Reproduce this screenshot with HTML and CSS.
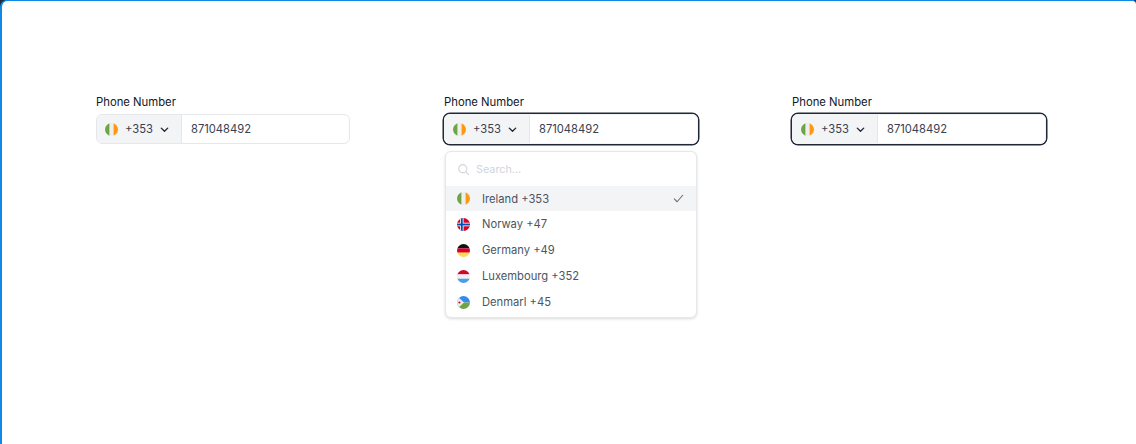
FILE: index.html
```html
<!DOCTYPE html>
<html lang="en">
<head>
<meta charset="utf-8">
<title>Phone Number</title>
<link rel="stylesheet" href="styles.css">
</head>
<body>
<svg width="0" height="0" class="defs">
  <defs>
    <clipPath id="c"><circle cx="6.5" cy="6.5" r="6.5"/></clipPath>
    <symbol id="ie" viewBox="0 0 13 13"><g clip-path="url(#c)"><rect width="13" height="13" fill="#eeeeee"/><rect width="4.4" height="13" fill="#6da544"/><rect x="8.6" width="4.4" height="13" fill="#ff9811"/></g></symbol>
    <symbol id="no" viewBox="0 0 13 13"><g clip-path="url(#c)"><rect width="13" height="13" fill="#d80027"/><rect x="3" width="3.6" height="13" fill="#eeeeee"/><rect y="4.7" width="13" height="3.6" fill="#eeeeee"/><rect x="3.9" width="1.8" height="13" fill="#0052b4"/><rect y="5.6" width="13" height="1.8" fill="#0052b4"/></g></symbol>
    <symbol id="de" viewBox="0 0 13 13"><g clip-path="url(#c)"><rect width="13" height="4.4" fill="#111111"/><rect y="4.4" width="13" height="4.3" fill="#d80027"/><rect y="8.7" width="13" height="4.3" fill="#ffda44"/></g></symbol>
    <symbol id="lu" viewBox="0 0 13 13"><g clip-path="url(#c)"><rect width="13" height="4.4" fill="#d80027"/><rect y="4.4" width="13" height="4.3" fill="#eeeeee"/><rect y="8.7" width="13" height="4.3" fill="#4b9bf5"/></g></symbol>
    <symbol id="dj" viewBox="0 0 13 13"><g clip-path="url(#c)"><rect width="13" height="6.5" fill="#338af3"/><rect y="6.5" width="13" height="6.5" fill="#6da544"/><path d="M0 0 L7 6.5 L0 13 Z" fill="#eeeeee"/><circle cx="2.4" cy="6.5" r="1.1" fill="#d80027"/></g></symbol>
  </defs>
</svg>
<main class="frame">
  <section class="field">
    <label class="label">Phone Number</label>
    <div class="control">
      <div class="prefix"><svg class="flag"><use href="#ie"/></svg><span>+353</span><svg class="chev" viewBox="0 0 12 12"><path d="M2.5 4.5 6 8l3.5-3.5"/></svg></div>
      <div class="number">871048492</div>
    </div>
  </section>
  <section class="field">
    <label class="label">Phone Number</label>
    <div class="control focused">
      <div class="prefix"><svg class="flag"><use href="#ie"/></svg><span>+353</span><svg class="chev" viewBox="0 0 12 12"><path d="M2.5 4.5 6 8l3.5-3.5"/></svg></div>
      <div class="number">871048492</div>
    </div>
    <div class="menu">
      <div class="search">
        <svg class="search-icon" viewBox="0 0 14 14"><circle cx="6.2" cy="6.2" r="4.4"/><path d="m9.5 9.5 3 3"/></svg>
        <span>Search...</span>
      </div>
      <div class="option selected"><svg class="flag"><use href="#ie"/></svg><span>Ireland +353</span><svg class="check" viewBox="0 0 14 14"><path d="M2.5 7.5 5.5 10.5 11.5 3.5"/></svg></div>
      <div class="option"><svg class="flag"><use href="#no"/></svg><span>Norway +47</span></div>
      <div class="option"><svg class="flag"><use href="#de"/></svg><span>Germany +49</span></div>
      <div class="option"><svg class="flag"><use href="#lu"/></svg><span>Luxembourg +352</span></div>
      <div class="option"><svg class="flag"><use href="#dj"/></svg><span>Denmarl +45</span></div>
    </div>
  </section>
  <section class="field">
    <label class="label">Phone Number</label>
    <div class="control focused">
      <div class="prefix"><svg class="flag"><use href="#ie"/></svg><span>+353</span><svg class="chev" viewBox="0 0 12 12"><path d="M2.5 4.5 6 8l3.5-3.5"/></svg></div>
      <div class="number">871048492</div>
    </div>
  </section>
</main>
</body>
</html>
```
FILE: styles.css
```css
* { box-sizing: border-box; }
html, body { margin: 0; height: 100%; background: #1f2d3d; overflow: hidden; }
body { font-family: Inter, "Liberation Sans", sans-serif; color: #111827; }
.defs { position: absolute; }
.frame {
  height: 444px;
  background: #fff;
  border-top: 1px solid #0d8ae6;
  border-left: 2px solid #0d8ae6;
  border-top-left-radius: 7px;
  border-top-right-radius: 4px;
  display: flex;
  gap: 94px;
  padding: 94px 0 0 94px;
}
.field { width: 254px; display: flex; flex-direction: column; }
.label { font-size: 11.3px; line-height: 15px; font-weight: 400; margin-bottom: 4px; color: #111827; }
.control {
  height: 30px;
  display: flex;
  border: 1px solid #e5e7eb;
  border-radius: 6px;
  overflow: hidden;
  font-size: 11.2px;
  color: #374151;
}
.control.focused { border-color: #f3f4f6; box-shadow: 0 0 0 1.5px #1f2937; }
.prefix {
  width: 85px;
  background: #f3f4f6;
  border-right: 1px solid #e5e7eb;
  display: flex;
  align-items: center;
  padding-left: 8px;
}
.prefix .flag { margin-right: 7px; }
.flag { width: 13px; height: 13px; flex: none; }
.chev { width: 11px; height: 11px; margin-left: 6px; fill: none; stroke: #1f2937; stroke-width: 1.5; stroke-linecap: round; stroke-linejoin: round; }
.number { padding-left: 9px; display: flex; align-items: center; }
.menu {
  margin: 7px 0 0 1px;
  height: 167px;
  width: 252px;
  border: 1px solid #e5e7eb;
  border-radius: 6px;
  box-shadow: 0 1px 3px rgba(0,0,0,.14);
  background: #fff;
  padding-top: 6px;
  font-size: 11.2px;
  color: #4b5563;
}
.search { height: 22px; display: flex; align-items: center; padding-left: 11px; color: #d1d5db; gap: 6px; margin-bottom: 6px; font-size: 10.8px; }
.search-icon { width: 13px; height: 13px; fill: none; stroke: #d1d5db; stroke-width: 1.2; stroke-linecap: round; }
.option { height: 26px; display: flex; align-items: center; padding: 0 11px; gap: 12px; }
.option.selected { background: #f3f4f6; height: 25px; }
.check { width: 13px; height: 13px; margin-left: auto; fill: none; stroke: #6b7280; stroke-width: 1.2; stroke-linecap: round; stroke-linejoin: round; }
```
